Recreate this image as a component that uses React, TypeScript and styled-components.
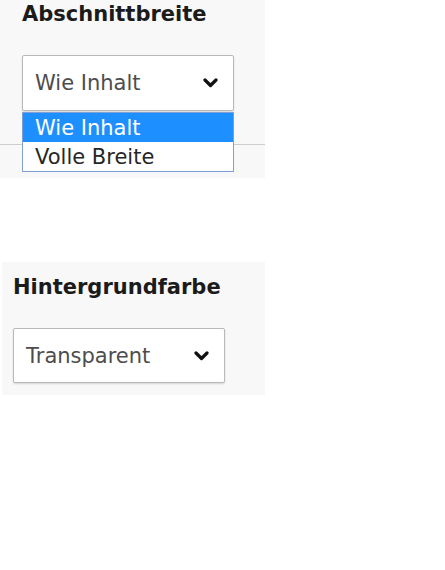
import React from "react";
import styled, { createGlobalStyle } from "styled-components";

const GlobalStyle = createGlobalStyle`
  html, body {
    margin: 0;
    padding: 0;
    background: #ffffff;
  }
  body {
    font-family: "DejaVu Sans", Verdana, sans-serif;
    font-size: 21px;
  }
`;

const Page = styled.div`
  display: flex;
  flex-direction: column;
  align-items: flex-start;
`;

const Panel = styled.section<{
  $indent: number;
  $offset: number;
  $top: number;
  $bottom: number;
  $gap: number;
  $height?: number;
}>`
  box-sizing: border-box;
  width: ${(p) => 265 - p.$offset}px;
  ${(p) => (p.$height ? `height: ${p.$height}px;` : "")}
  margin-left: ${(p) => p.$offset}px;
  margin-top: ${(p) => p.$gap}px;
  padding: ${(p) => p.$top}px 0 ${(p) => p.$bottom}px ${(p) => p.$indent}px;
  background: #f8f8f8;
  display: flex;
  flex-direction: column;
  align-items: flex-start;
`;

const Title = styled.h3`
  margin: 0;
  font-size: 21px;
  line-height: 24px;
  font-weight: bold;
  color: #1b1b1b;
`;

const SelectWrap = styled.div`
  position: relative;
  margin-top: 29px;
  width: 212px;
`;

const SelectBox = styled.div<{ $h: number }>`
  box-sizing: border-box;
  width: 212px;
  height: ${(p) => p.$h}px;
  border: 1px solid #b9b9b9;
  border-radius: 2px;
  background: #ffffff;
  box-shadow: 0 1px 2px rgba(0, 0, 0, 0.14);
  display: flex;
  align-items: center;
  justify-content: space-between;
  padding: 0 15px 0 12px;
  color: #4d4d4d;
  font-size: 21px;
  line-height: 24px;
`;

const Chevron = styled.svg`
  width: 15px;
  height: 10px;
  flex: none;
`;

const DropList = styled.ul`
  position: absolute;
  top: 100%;
  left: 0;
  z-index: 2;
  box-sizing: border-box;
  width: 212px;
  margin: 1px 0 0;
  padding: 0;
  list-style: none;
  background: #ffffff;
  border: 1px solid #7f9fd6;
`;

const Option = styled.li<{ $active?: boolean }>`
  height: 29px;
  line-height: 30px;
  padding-left: 12px;
  font-size: 21px;
  background: ${(p) => (p.$active ? "#1e8fff" : "#ffffff")};
  color: ${(p) => (p.$active ? "#ffffff" : "#262626")};
`;

const Divider = styled.hr`
  align-self: stretch;
  margin: 33px 0 0 -22px;
  border: none;
  border-top: 1px solid #cdcdcd;
  height: 0;
`;

const ChevronIcon = () => (
  <Chevron viewBox="0 0 15 10" aria-hidden="true">
    <path
      d="M2 2 L7.5 7.5 L13 2"
      fill="none"
      stroke="#111"
      strokeWidth="3.2"
      strokeLinecap="round"
      strokeLinejoin="round"
    />
  </Chevron>
);

export default function App() {
  return (
    <Page>
      <GlobalStyle />
      <Panel $indent={22} $offset={0} $top={2} $bottom={0} $gap={0} $height={178}>
        <Title>Abschnittbreite</Title>
        <SelectWrap>
          <SelectBox $h={56}>
            <span>Wie Inhalt</span>
            <ChevronIcon />
          </SelectBox>
          <DropList>
            <Option $active>Wie Inhalt</Option>
            <Option>Volle Breite</Option>
          </DropList>
        </SelectWrap>
        <Divider />
      </Panel>
      <Panel $indent={11} $offset={2} $top={13} $bottom={12} $gap={84}>
        <Title>Hintergrundfarbe</Title>
        <SelectWrap>
          <SelectBox $h={55}>
            <span>Transparent</span>
            <ChevronIcon />
          </SelectBox>
        </SelectWrap>
      </Panel>
    </Page>
  );
}
